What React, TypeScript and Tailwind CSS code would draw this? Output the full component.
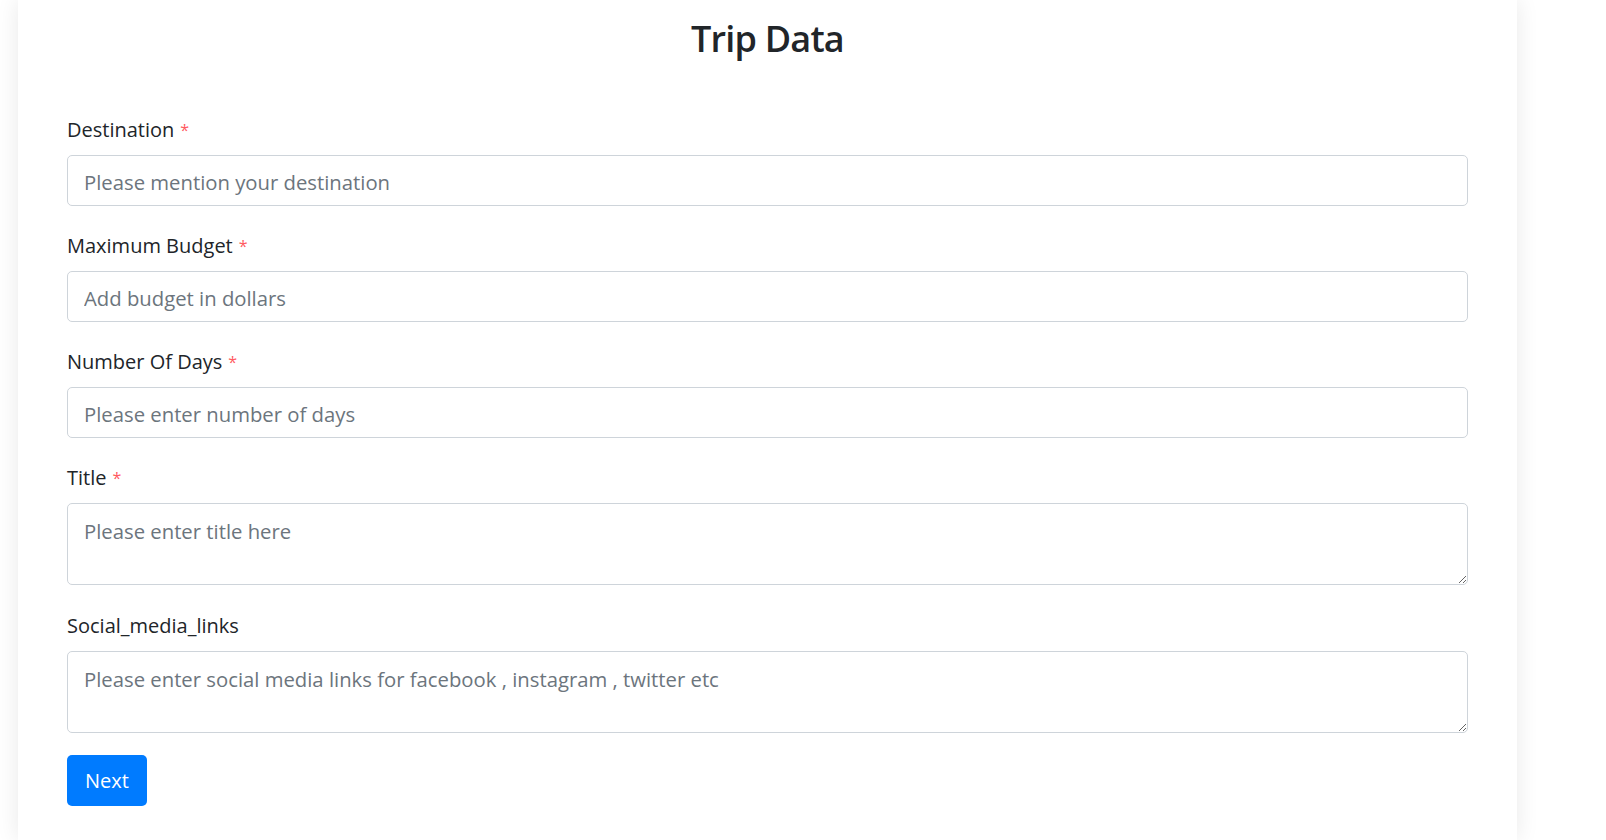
import React from 'react';

// Form field definitions
const fields = [
    { label: 'Destination', placeholder: 'Please mention your destination', required: true, multi: false },
    { label: 'Maximum Budget', placeholder: 'Add budget in dollars', required: true, multi: false },
    { label: 'Number Of Days', placeholder: 'Please enter number of days', required: true, multi: false },
    { label: 'Title', placeholder: 'Please enter title here', required: true, multi: true },
    { label: 'Social_media_links', placeholder: 'Please enter social media links for facebook , instagram , twitter etc', required: false, multi: true },
];

const App: React.FC = () => {
    return (
        <div className="min-h-screen w-full bg-white overflow-hidden" style={{ fontFamily: '"Open Sans", "Noto Sans", sans-serif' }}>
            <div className="ml-[18px] w-[1499px] min-h-[840px] bg-white shadow-[0_0_22px_rgba(0,0,0,0.09)] px-[49px]">
                <h1 className="text-center text-[36px] leading-[48px] font-semibold text-[#212529] pt-[15px] mb-[52px] tracking-[-0.8px]">
                    Trip Data
                </h1>

                <form onSubmit={(e) => e.preventDefault()}>
                    {fields.map((f) => (
                        <div key={f.label} className={f.multi ? 'mb-[26px]' : 'mb-[25px]'}>
                            <label className="block text-[20px] leading-[30px] text-[#212529] mb-[10px]">
                                {f.label}
                                {f.required && <span className="text-[#ff5a5f] text-[16px] align-top ml-[6px]">*</span>}
                            </label>
                            {f.multi ? (
                                <textarea
                                    placeholder={f.placeholder}
                                    className="block w-full h-[82px] rounded-[5px] border border-[#ced4da] px-[16px] pt-[12px] pb-[8px] text-[20.3px] leading-[30px] text-[#495057] placeholder:text-[#6c757d] outline-none"
                                />
                            ) : (
                                <input
                                    type="text"
                                    placeholder={f.placeholder}
                                    className="block w-full h-[51px] rounded-[5px] border border-[#ced4da] px-[16px] pt-[3px] text-[20.3px] text-[#495057] placeholder:text-[#6c757d] outline-none"
                                />
                            )}
                        </div>
                    ))}

                    <button
                        type="submit"
                        className="-mt-[4px] w-[80px] h-[51px] rounded-[5px] bg-[#007bff] text-white text-[20px]"
                    >
                        Next
                    </button>
                </form>
            </div>
        </div>
    );
};

export default App;
